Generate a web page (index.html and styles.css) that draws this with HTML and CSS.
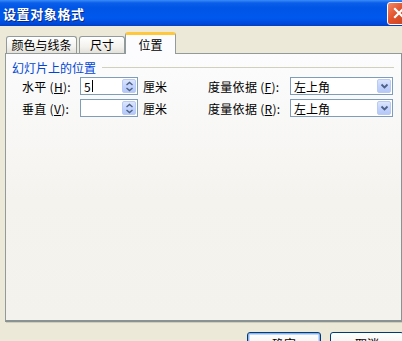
FILE: index.html
```html
<!DOCTYPE html>
<html lang="zh-CN">
<head>
    <meta charset="UTF-8">
    <title>设置对象格式</title>
    <link rel="stylesheet" href="styles.css">
</head>
<body>
    <div class="window">
        <!-- Barra de título -->
        <div class="titlebar">
            <span class="title">设置对象格式</span>
            <span class="close-btn">
                <svg width="14" height="14" viewBox="0 0 14 14">
                    <path d="M3 3 L11 11 M11 3 L3 11" stroke="#fff" stroke-width="2.2" stroke-linecap="square"/>
                </svg>
            </span>
        </div>

        <div class="content">
            <div class="tabs">
                <div class="tab tab-color">颜色与线条</div>
                <div class="tab tab-size">尺寸</div>
                <div class="tab active">位置</div>
            </div>

            <div class="panel">
                <div class="group-title">
                    <span>幻灯片上的位置</span>
                    <span class="group-line"></span>
                </div>

                <div class="form-grid">
                    <span class="label">水平 (<u>H</u>):</span>
                    <div class="spin-box">
                        <span class="spin-value">5<span class="caret"></span></span>
                        <span class="spin-btn">
                            <svg width="9" height="11" viewBox="0 0 9 11">
                                <path d="M1.5 4 L4.5 1.5 L7.5 4 M1.5 7 L4.5 9.5 L7.5 7" fill="none" stroke="#4d6185" stroke-width="1.4"/>
                            </svg>
                        </span>
                    </div>
                    <span class="unit">厘米</span>
                    <span class="label">度量依据 (<u>F</u>):</span>
                    <div class="select-box">
                        <span class="select-value">左上角</span>
                        <span class="drop-btn">
                            <svg width="9" height="7" viewBox="0 0 9 7">
                                <path d="M1.5 1.5 L4.5 4.5 L7.5 1.5" fill="none" stroke="#4d6185" stroke-width="1.8"/>
                            </svg>
                        </span>
                    </div>

                    <span class="label">垂直 (<u>V</u>):</span>
                    <div class="spin-box">
                        <span class="spin-value"></span>
                        <span class="spin-btn">
                            <svg width="9" height="11" viewBox="0 0 9 11">
                                <path d="M1.5 4 L4.5 1.5 L7.5 4 M1.5 7 L4.5 9.5 L7.5 7" fill="none" stroke="#4d6185" stroke-width="1.4"/>
                            </svg>
                        </span>
                    </div>
                    <span class="unit">厘米</span>
                    <span class="label">度量依据 (<u>R</u>):</span>
                    <div class="select-box">
                        <span class="select-value">左上角</span>
                        <span class="drop-btn">
                            <svg width="9" height="7" viewBox="0 0 9 7">
                                <path d="M1.5 1.5 L4.5 4.5 L7.5 1.5" fill="none" stroke="#4d6185" stroke-width="1.8"/>
                            </svg>
                        </span>
                    </div>
                </div>
            </div>

            <div class="buttons">
                <button class="xp-btn ok-btn">确定</button>
                <button class="xp-btn">取消</button>
            </div>
        </div>
    </div>
</body>
</html>
```

FILE: styles.css
```css
body {
    margin: 0;
    padding: 0;
    font-family: "Noto Sans CJK SC", "DejaVu Sans", sans-serif;
    font-size: 12px;
    background-color: #ece9d8;
    overflow: hidden;
}

.window {
    width: 402px;
    height: 341px;
    background-color: #ece9d8;
    overflow: hidden;
}

.titlebar {
    height: 26px;
    display: flex;
    align-items: center;
    justify-content: space-between;
    background: linear-gradient(to bottom, #3a8cf8 0px, #0a5ee8 3px, #0055e5 8px, #0058ee 18px, #0048d8 24px, #003fc2 26px);
}

.title {
    color: #fff;
    font-weight: bold;
    font-size: 13px;
    letter-spacing: 0.6px;
    padding-left: 3px;
    text-shadow: 1px 1px 0 #0a2a8a;
}

.close-btn {
    width: 21px;
    height: 21px;
    margin-right: -8px;
    border: 1px solid #fff;
    border-radius: 3px;
    background: linear-gradient(135deg, #f08a6a, #e2522b 45%, #c8401c);
    display: flex;
    align-items: center;
    justify-content: center;
}

.content {
    padding-left: 5px;
}

.tabs {
    display: flex;
    align-items: flex-end;
    height: 27px;
    padding-left: 1px;
}

.tab {
    height: 16px;
    line-height: 16px;
    border: 1px solid #919b9c;
    border-bottom: none;
    border-radius: 3px 3px 0 0;
    background: linear-gradient(to bottom, #ffffff, #f3f2ee 60%, #e3e1d8);
    text-align: center;
    color: #000;
}

.tab-color {
    width: 69px;
}

.tab-size {
    width: 44px;
    margin-left: 2px;
}

.tab.active {
    width: 49px;
    height: 19px;
    line-height: 19px;
    margin-bottom: -1px;
    position: relative;
    z-index: 1;
    background: #fcfcfe;
    border-top: 3px solid #ffc83c;
    box-shadow: inset 0 -1px 0 #fcfcfe;
}

.panel {
    width: 395px;
    height: 266px;
    border: 1px solid #919b9c;
    border-right-color: #8a9393;
    border-bottom: 2px solid #8a9393;
    background: linear-gradient(to bottom, #fcfcfe 0%, #f4f3ee 55%, #f3f2ec 100%);
    box-shadow: 1px 1px 0 #d0cdbd;
}

.group-title {
    display: flex;
    align-items: center;
    padding: 6px 7px 0 6px;
    color: #0046d5;
    height: 14px;
}

.group-line {
    flex: 1;
    height: 1px;
    background-color: #d0d0bf;
    margin-left: 6px;
}

.form-grid {
    display: grid;
    grid-template-columns: 58px 58px 70px 82px 103px;
    grid-auto-rows: 18px;
    row-gap: 4px;
    align-items: center;
    padding: 3px 0 0 16px;
}

.label {
    letter-spacing: 0.3px;
}

.label u {
    text-decoration: underline;
}

.unit {
    padding-left: 5px;
}

.spin-box,
.select-box {
    height: 16px;
    border: 1px solid #7f9db9;
    background-color: #fff;
    display: flex;
    align-items: center;
    justify-content: space-between;
}

.spin-value,
.select-value {
    padding-left: 3px;
    display: flex;
    align-items: center;
}

.caret {
    display: inline-block;
    width: 1px;
    height: 12px;
    background-color: #000;
    margin-left: 1px;
}

.spin-btn,
.drop-btn {
    width: 14px;
    height: 14px;
    margin-right: 1px;
    border-radius: 2px;
    background: linear-gradient(to bottom, #dce6fb, #c3d3fd 50%, #b5c8f7);
    border: 1px solid #b9cbf3;
    box-sizing: border-box;
    display: flex;
    align-items: center;
    justify-content: center;
}

.buttons {
    display: flex;
    justify-content: flex-end;
    gap: 9px;
    margin-top: 10px;
    margin-right: -2px;
}

.xp-btn {
    width: 74px;
    height: 23px;
    font-family: inherit;
    font-size: 12px;
    color: #000;
    border: 1px solid #003c74;
    border-radius: 3px;
    background: linear-gradient(to bottom, #ffffff, #f0f0ea 70%, #d6d0c5);
    padding: 0;
}

.ok-btn {
    box-shadow: inset 0 0 0 1px #8db2f0, inset 0 0 0 2px #c6d8f9;
}
```
